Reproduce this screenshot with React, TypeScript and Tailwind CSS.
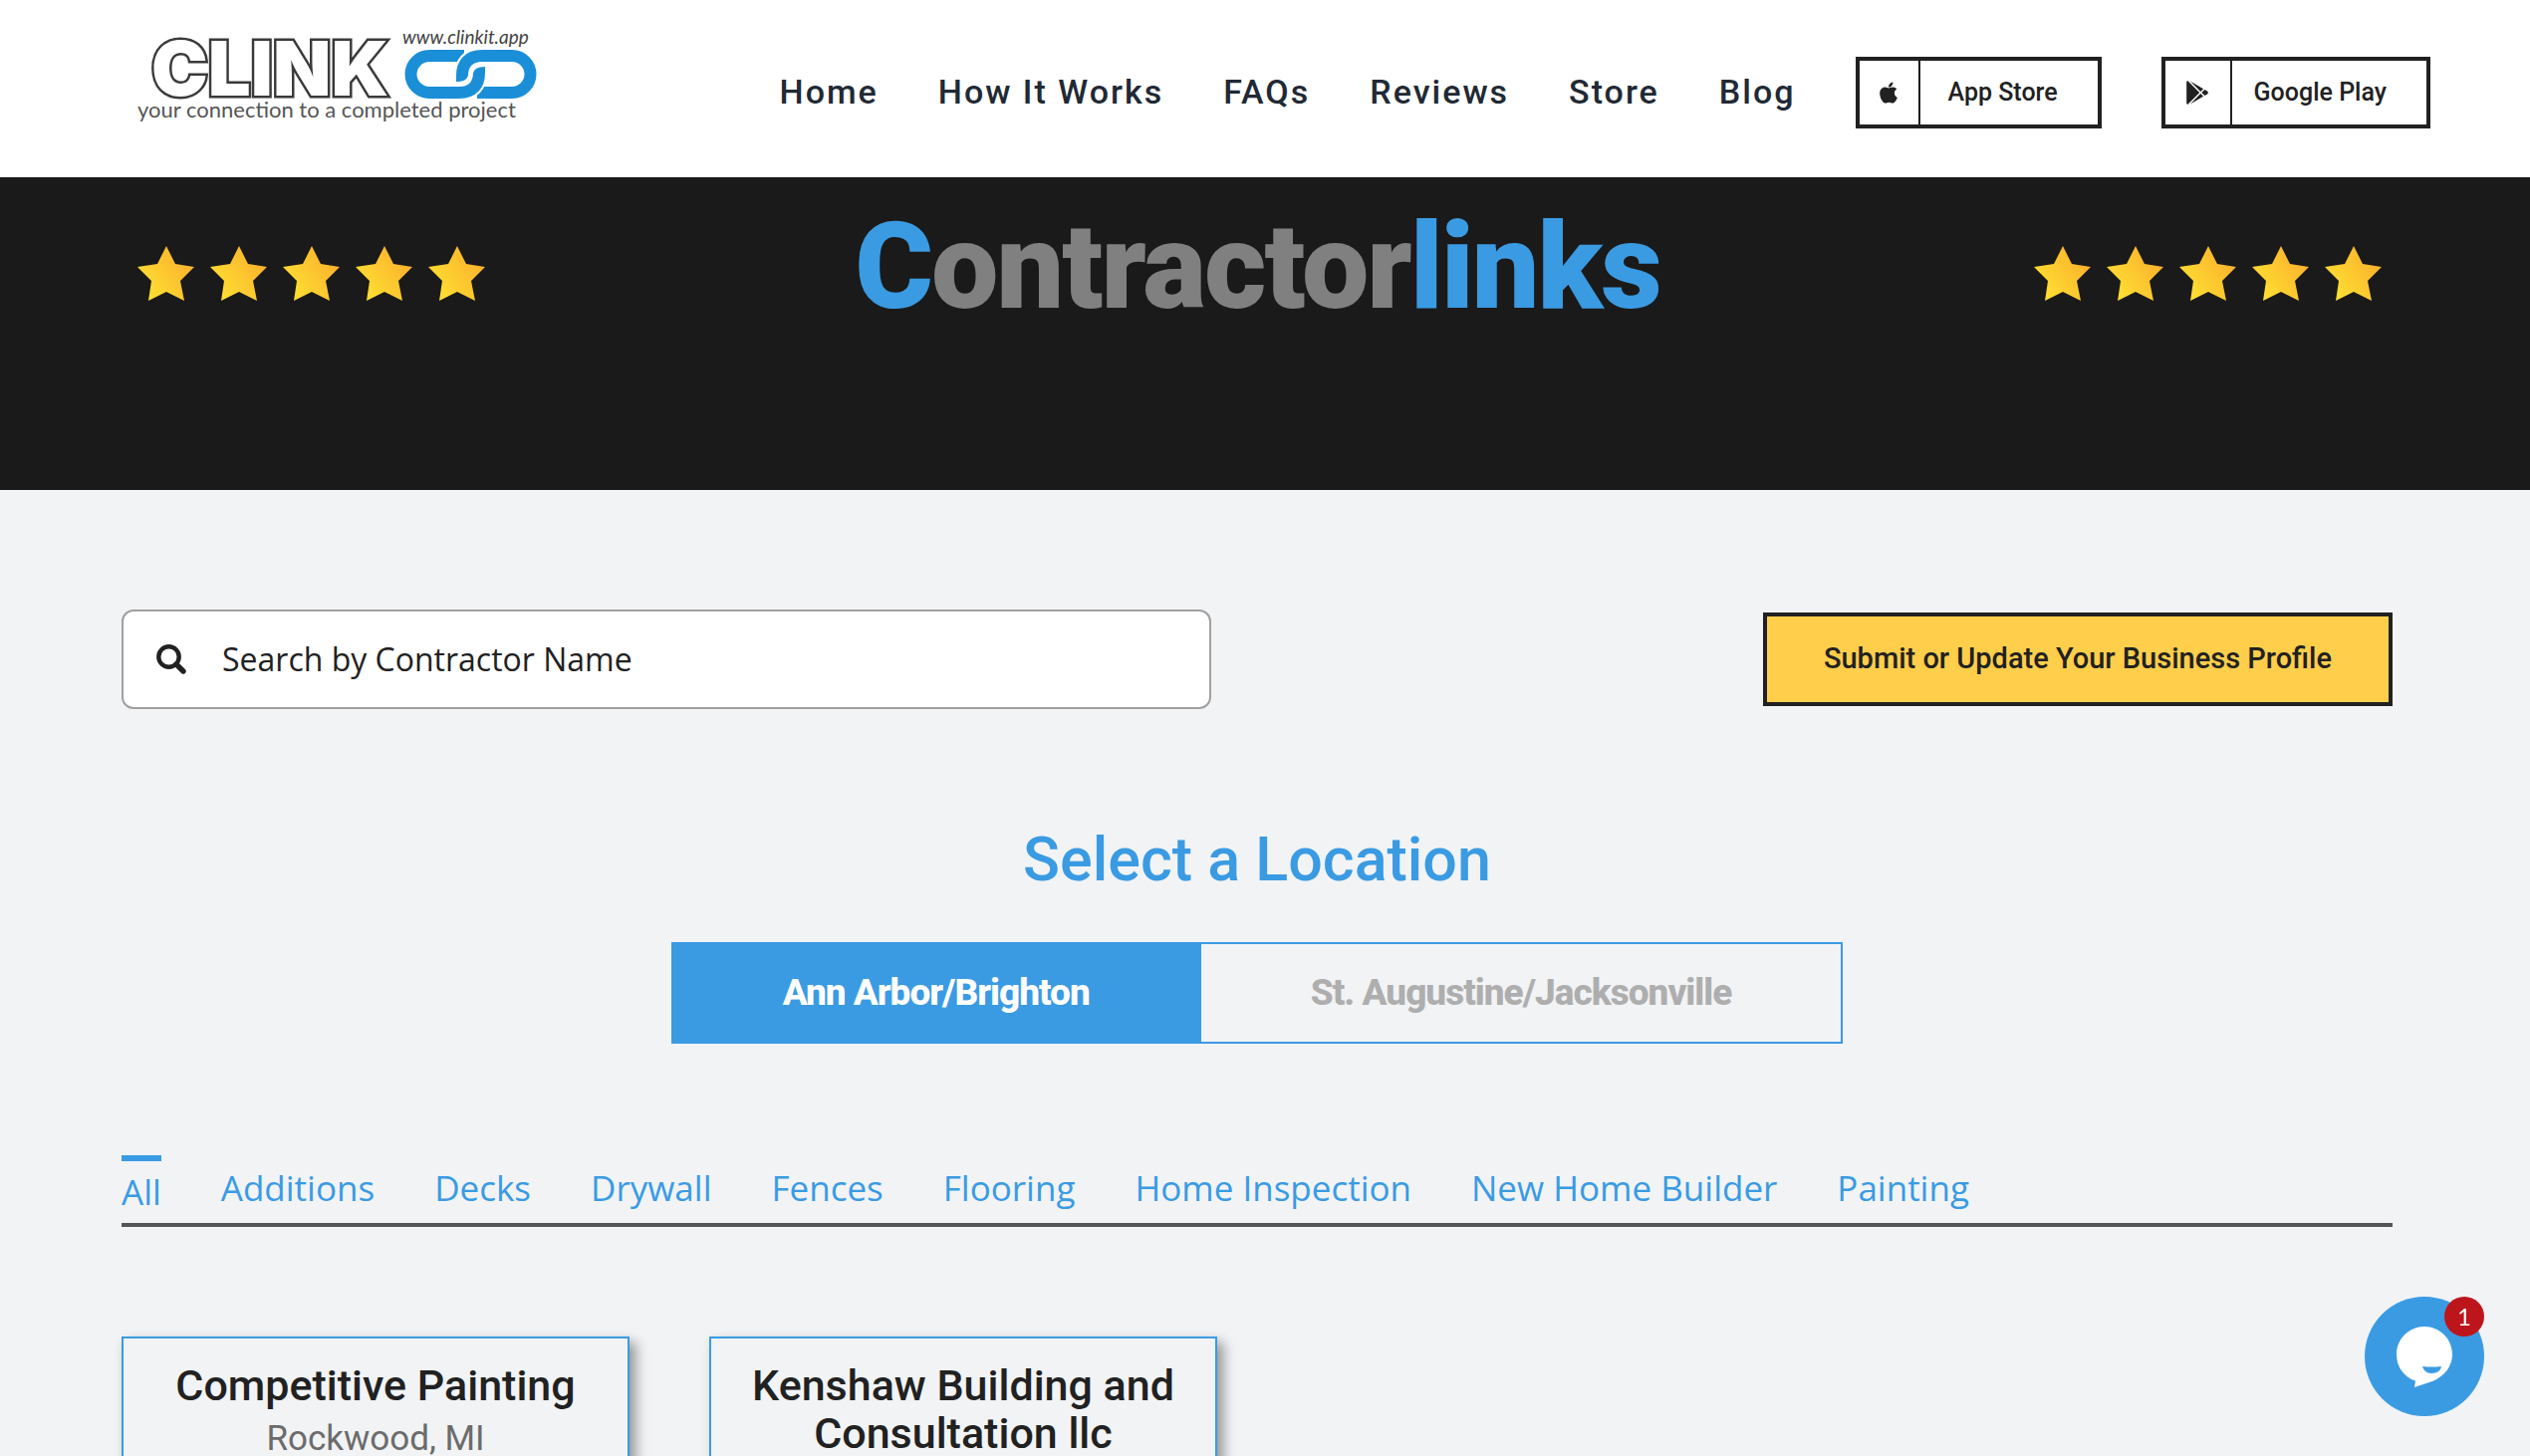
import { FaApple, FaGooglePlay } from 'react-icons/fa';

const navItems = ['Home', 'How It Works', 'FAQs', 'Reviews', 'Store', 'Blog'];

const categories = [
  'Additions',
  'Decks',
  'Drywall',
  'Fences',
  'Flooring',
  'Home Inspection',
  'New Home Builder',
  'Painting',
];

const contractors = [
  { name: 'Competitive Painting', city: 'Rockwood, MI' },
  { name: 'Kenshaw Building and Consultation llc' },
];

function Logo() {
  return (
    <svg className="h-[110px] w-[440px] shrink-0" viewBox="110 20 440 110" role="img" aria-label="Clink">
      <text x="152" y="96" fontSize="76" fontWeight="900" fontFamily="Inter" fill="#fff" stroke="#3a3a3a" strokeWidth="5" paintOrder="stroke">CLINK</text>
      <g fill="none" strokeLinecap="butt">
        <path d="M466 56 H431 a18.5 18.5 0 0 0 0 37 H463" stroke="#fff" strokeWidth="16" />
        <path d="M466 56 H431 a18.5 18.5 0 0 0 0 37 H463" stroke="#1a8fd8" strokeWidth="12" />
        <path d="M479 93 H514 a18.5 18.5 0 0 0 0 -37 H482" stroke="#1a8fd8" strokeWidth="12" />
        <path d="M484 56 C470 56 464 64 464 76" stroke="#fff" strokeWidth="16" />
        <path d="M461 93 C475 93 481 85 481 73" stroke="#fff" strokeWidth="16" />
        <path d="M484 56 C470 56 464 64 464 76" stroke="#1a8fd8" strokeWidth="12" />
        <path d="M461 93 C475 93 481 85 481 73" stroke="#1a8fd8" strokeWidth="12" />
      </g>
      <path d="M458 76 V82 Q470 82 470 74 Z M487 73 V67 Q475 67 475 75 Z" fill="#1a8fd8" />
      <text x="404" y="44" fontSize="19" fontStyle="italic" fontFamily="Lato" fill="#444">www.clinkit.app</text>
      <text x="138" y="118" fontSize="22" fontFamily="Lato" fill="#555">your connection to a completed project</text>
    </svg>
  );
}

function Stars() {
  return (
    <div className="flex gap-4" role="img" aria-label="5 stars">
      {[1, 2, 3, 4, 5].map((n) => (
        <svg key={n} className="h-14 w-[57px]" viewBox="0 0 57 56">
          <defs>
            <linearGradient id="star" x1="0" y1="1" x2="1" y2="0.3">
              <stop offset="0" stopColor="#ffe833" />
              <stop offset="1" stopColor="#fbb02d" />
            </linearGradient>
          </defs>
          <path d="M29 0 L38 18 L57 21 L43 35 L47 55 L29 46 L11 55 L14 35 L0 21 L20 18 Z" fill="url(#star)" />
        </svg>
      ))}
    </div>
  );
}

function SearchIcon() {
  return (
    <svg className="h-[30px] w-[30px]" viewBox="0 0 30 30" fill="none" stroke="#212121" aria-hidden="true">
      <circle cx="12.5" cy="12.5" r="10.2" strokeWidth="4.4" />
      <path d="M20 20 L27 27" strokeWidth="5.4" strokeLinecap="round" />
    </svg>
  );
}

function Header() {
  return (
    <header className="flex h-[178px] items-center justify-between bg-white pr-[100px] pl-[110px]">
      <a href="#" className="mb-7">
        <Logo />
      </a>
      <div className="flex items-center gap-[60px] pt-2">
        <nav className="flex gap-[60px] pb-0.5 text-[34px] font-medium tracking-[2px] text-[#212934]">
          {navItems.map((item) => (
            <a key={item} href="#">{item}</a>
          ))}
        </nav>
        <a href="#" className="flex h-[72px] items-stretch border-4 border-[#212121] text-[25px] font-medium">
          <span className="flex w-[61px] items-center justify-center border-r-2 border-[#212121]">
            <FaApple className="text-2xl" />
          </span>
          <span className="flex items-center pr-10 pl-7">App Store</span>
        </a>
        <a href="#" className="flex h-[72px] items-stretch border-4 border-[#212121] text-[25px] font-medium">
          <span className="flex w-[67px] items-center justify-center border-r-2 border-[#212121]">
            <FaGooglePlay className="text-2xl" />
          </span>
          <span className="flex items-center pr-10 pl-[22px]">Google Play</span>
        </a>
      </div>
    </header>
  );
}

function ChatButton() {
  return (
    <button className="fixed right-[46px] bottom-10 h-[120px] w-[120px] rounded-full bg-[#3a9be3]" aria-label="Open chat">
      <svg className="h-full w-full" viewBox="0 0 120 120">
        <path d="M60 30 C75 30 88 42 88 58 C88 70 80 80 68 85 L50 91 L51 84.500 C40 81 32 71 32 58 C32 42 45 30 60 30 Z" fill="#fff" />
        <path d="M58 70 Q67 71 77 70 Q76 77 67 77 Q60 77 58 70 Z" fill="#3a9be3" />
      </svg>
      <span className="absolute top-0 right-0 flex h-10 w-10 items-center justify-center rounded-full bg-[#bd151c] font-[Lato] text-2xl text-white">1</span>
    </button>
  );
}

export default function App() {
  return (
    <div className="h-screen overflow-hidden bg-[#f1f3f5] font-[Roboto,sans-serif] text-[#212121]">
      <Header />

      <section className="flex h-[314px] items-start justify-between bg-[#1a1a1a] pr-[149px] pl-[138px]">
        <div className="pt-[69px]"><Stars /></div>
        <h1 className="pt-5 pr-1 text-[120px] leading-[140px] font-black tracking-[-2px] text-[#808080]">
          <span className="text-[#3a9be3]">C</span>ontractor<span className="text-[#3a9be3]">links</span>
        </h1>
        <div className="pt-[69px]"><Stars /></div>
      </section>

      <main className="pt-[120px] pr-[138px] pl-[122px]">
        <div className="flex items-center justify-between">
          <label className="flex h-[100px] w-[48%] items-center gap-9 rounded-xl border-2 border-[#a0a0a0] bg-white pl-[33px]">
            <SearchIcon />
            <input
              type="search"
              aria-label="Search by Contractor Name"
              placeholder="Search by Contractor Name"
              className="flex-1 font-['Open_Sans',sans-serif] text-[32px] outline-none placeholder:text-[#212121]"
            />
          </label>
          <button className="h-[94px] border-4 border-[#212121] bg-[#ffce4b] px-[57px] text-[29px] font-medium">
            Submit or Update Your Business Profile
          </button>
        </div>

        <h2 className="mt-[116px] text-center text-[61px] leading-[70px] font-medium text-[#3a9be3]">Select a Location</h2>

        <div className="mt-12 flex justify-center text-[37px] font-extrabold tracking-[-1px]">
          <button className="h-[102px] border-2 border-[#3a9be3] bg-[#3a9be3] px-[110px] text-white">Ann Arbor/Brighton</button>
          <button className="h-[102px] border-2 border-l-0 border-[#3a9be3] px-[110px] text-[#aeaeae]">St. Augustine/Jacksonville</button>
        </div>

        <nav className="mt-28 flex h-[72px] items-start gap-[60px] border-b-4 border-[#555] font-['Open_Sans',sans-serif] text-[35px] leading-[50px] text-[#3a9be3]">
          <a href="#" className="border-t-6 border-[#3a9be3] pt-1.5">All</a>
          {categories.map((category) => (
            <a key={category} href="#" className="pt-2">{category}</a>
          ))}
        </nav>

        <div className="mt-[110px] flex items-start gap-20">
          {contractors.map((contractor) => (
            <article key={contractor.name} className="h-[360px] w-[510px] border-2 border-[#3a9be3] bg-[#f1f3f5] px-6 pt-[23px] text-center shadow-[6px_6px_12px_rgba(0,0,0,0.4)]">
              <h3 className="text-[43px] leading-12 font-medium">{contractor.name}</h3>
              {contractor.city && <p className="mt-1.5 text-[35px] leading-12 text-[#6b6b6b]">{contractor.city}</p>}
            </article>
          ))}
        </div>
      </main>

      <ChatButton />
    </div>
  );
}
